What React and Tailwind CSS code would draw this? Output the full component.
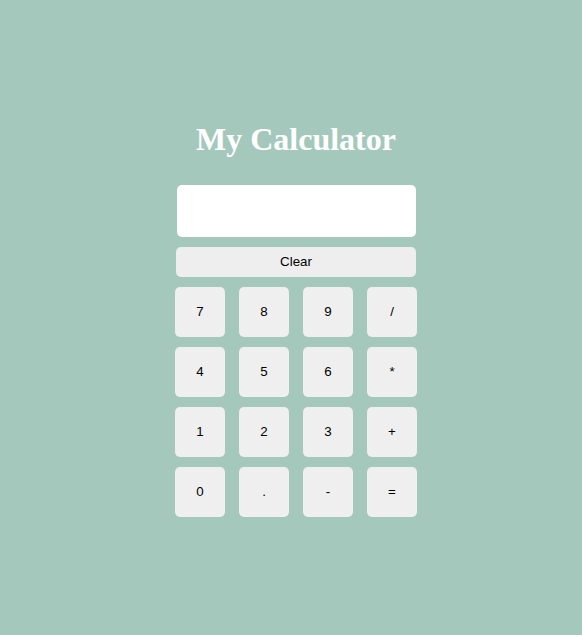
import { useState } from 'react';

const KEYS = ['7', '8', '9', '/', '4', '5', '6', '*', '1', '2', '3', '+', '0', '.', '-', '='];

export default function App() {
  const [display, setDisplay] = useState('');

  const press = (k) => {
    if (k === '=') {
      try {
        // eslint-disable-next-line no-new-func
        setDisplay(String(Function('return (' + display + ')')()));
      } catch {
        setDisplay('Error');
      }
      return;
    }
    setDisplay((d) => d + k);
  };

  return (
    <div className="min-h-[635px] bg-[#a4c9bc] pt-[121px] pl-[10px] flex justify-center font-['Liberation_Sans',Arial,sans-serif]">
      <div className="w-[242px] flex flex-col items-start">
        <h1 className="self-center text-[32px] leading-[37px] font-bold text-white font-['Liberation_Serif','Times_New_Roman',serif] whitespace-nowrap">
          My Calculator
        </h1>
        <input
          type="text"
          readOnly
          value={display}
          className="mt-[27px] ml-[2px] w-[239px] h-[52px] bg-white rounded-[5px] outline-none px-2 text-right text-xl text-black"
        />
        <button
          onClick={() => setDisplay('')}
          className="mt-[10px] ml-[1px] w-[240px] h-[30px] bg-[#eeeeee] rounded-[5px] text-[13.33px] text-black"
        >
          Clear
        </button>
        <div className="mt-[10px] grid grid-cols-4 gap-x-[14px] gap-y-[10px] w-[242px]">
          {KEYS.map((k) => (
            <button
              key={k}
              onClick={() => press(k)}
              className="w-[50px] h-[50px] bg-[#efefef] rounded-[5px] text-[13.33px] text-black"
            >
              {k}
            </button>
          ))}
        </div>
      </div>
    </div>
  );
}
